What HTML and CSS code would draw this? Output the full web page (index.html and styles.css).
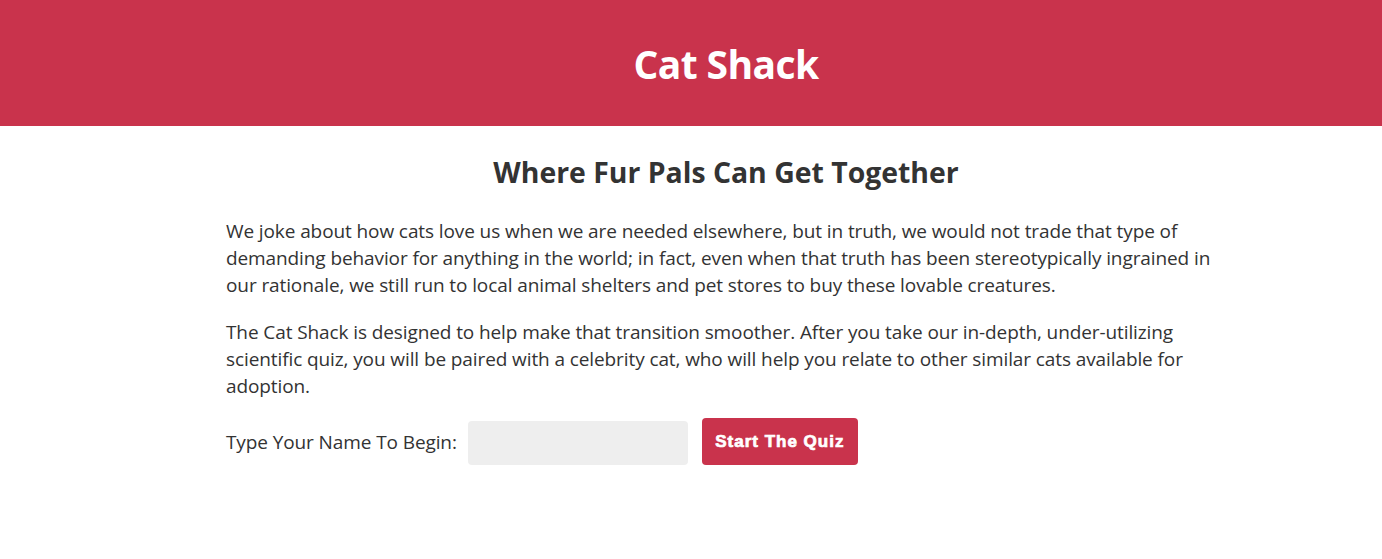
FILE: index.html
```html
<!DOCTYPE html>
<html lang="en">
<head>
<meta charset="utf-8">
<title>Cat Shack</title>
<link rel="stylesheet" href="styles.css">
</head>
<body>
<header class="site-header">
  <h1 class="site-title">Cat Shack</h1>
</header>
<main class="content">
  <h2 class="tagline">Where Fur Pals Can Get Together</h2>
  <p class="copy">We joke about how cats love us when we are needed elsewhere, but in truth, we would not trade that type of demanding behavior for anything in the world; in fact, even when that truth has been stereotypically ingrained in our rationale, we still run to local animal shelters and pet stores to buy these lovable creatures.</p>
  <p class="copy">The Cat Shack is designed to help make that transition smoother. After you take our in-depth, under-utilizing scientific quiz, you will be paired with a celebrity cat, who will help you relate to other similar cats available for adoption.</p>
  <form class="start-form">
    <label class="start-label" for="name">Type Your Name To Begin:</label>
    <input class="start-input" id="name" type="text">
    <button class="start-btn" type="button">Start The Quiz</button>
  </form>
</main>
</body>
</html>
```

FILE: styles.css
```css
html, body {
  margin: 0;
  padding: 0;
  background: #fff;
}
body {
  font-family: "Open Sans", "Noto Sans", sans-serif;
  color: #333;
  padding-left: 70px;
}
.site-header {
  background: #c9334c;
  height: 126px;
  display: flex;
  align-items: center;
  justify-content: center;
  margin-left: -70px;
  padding-left: 70px;
}
.site-title {
  margin: 0;
  color: #fff;
  font-size: 39px;
  font-weight: 700;
  letter-spacing: -0.6px;
}
.content {
  width: 1000px;
  margin: 0 auto;
  padding-top: 26px;
}
.tagline {
  margin: 0 0 26px;
  text-align: center;
  font-size: 28.4px;
  font-weight: 700;
  line-height: 40px;
}
.copy {
  margin: 0 0 20px;
  font-size: 19px;
  line-height: 27px;
  letter-spacing: -0.1px;
}
.start-form {
  display: flex;
  align-items: center;
  margin-top: -2px;
}
.start-label {
  font-size: 19px;
  letter-spacing: -0.1px;
  margin-right: 11px;
}
.start-input {
  width: 220px;
  height: 44px;
  box-sizing: border-box;
  border: none;
  border-radius: 4px;
  background: #eee;
  margin-right: 14px;
  margin-top: 3px;
}
.start-btn {
  width: 156px;
  height: 47px;
  border: none;
  border-radius: 4px;
  background: #c9334c;
  color: #fff;
  font-family: "Liberation Sans", Arial, sans-serif;
  font-weight: 700;
  font-size: 17px;
  letter-spacing: 1px;
  -webkit-text-stroke: 0.7px #fff;
  padding: 0;
}
```
